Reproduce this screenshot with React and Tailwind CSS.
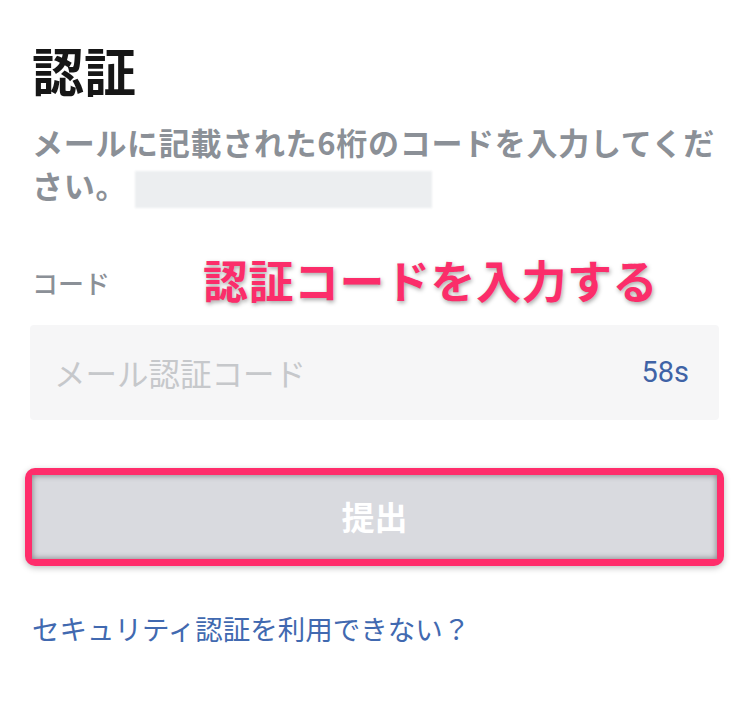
import React from "react";

const jp = "font-['Noto_Sans_CJK_JP','Noto_Sans',sans-serif]";

export default function App() {
  return (
    <div className={`relative w-[749px] h-[717px] bg-white overflow-hidden ${jp}`}>
      <div className="px-8 pt-[38px]">
        <h1 className="text-[52px] leading-[64px] font-bold text-[#161616]">認証</h1>

        <p className="mt-[18px] text-[31px] leading-[43px] font-semibold tracking-[0.7px] text-[#8b9097]">
          メールに記載された6桁のコードを入力してください。
          <span className="inline-block align-middle ml-2 w-[297px] h-[37px] bg-[#eceef0] blur-[1px]" />
        </p>

        <div className="mt-[60px] text-[26px] leading-[30px] font-medium text-[#8b9097]">コード</div>
      </div>

      <div className="mx-[30px] mt-[27px] h-[95px] rounded-[4px] bg-[#f6f6f7] flex items-center justify-between pl-[24px] pr-[30px]">
        <span className="text-[31.5px] text-[#c6c8cb]">メール認証コード</span>
        <span className="text-[29px] text-[#3f63a6] font-['Roboto','Liberation_Sans',sans-serif]">58s</span>
      </div>

      <div className="mx-[25px] mt-[48px] h-[98px] rounded-[10px] bg-[#ff2d6b] p-[7px] shadow-[0_2px_6px_rgba(0,0,0,0.25)]">
        <button className="w-full h-full bg-[#d9dadf] shadow-[inset_0_0_6px_rgba(0,0,0,0.45)] flex items-center justify-center">
          <span className="text-[33px] font-bold text-white">提出</span>
        </button>
      </div>

      <div className="px-8 mt-[42px]">
        <a className="text-[27.5px] leading-[40px] text-[#4169b0]">セキュリティ認証を利用できない？</a>
      </div>

      <div className="absolute left-[203px] top-[250px] text-[45px] leading-[60px] font-bold text-[#fb2d6a] tracking-[0.5px] [-webkit-text-stroke:4px_white] [paint-order:stroke_fill] [text-shadow:1px_2px_4px_rgba(0,0,0,0.35)]">
        認証コードを入力する
      </div>
    </div>
  );
}
